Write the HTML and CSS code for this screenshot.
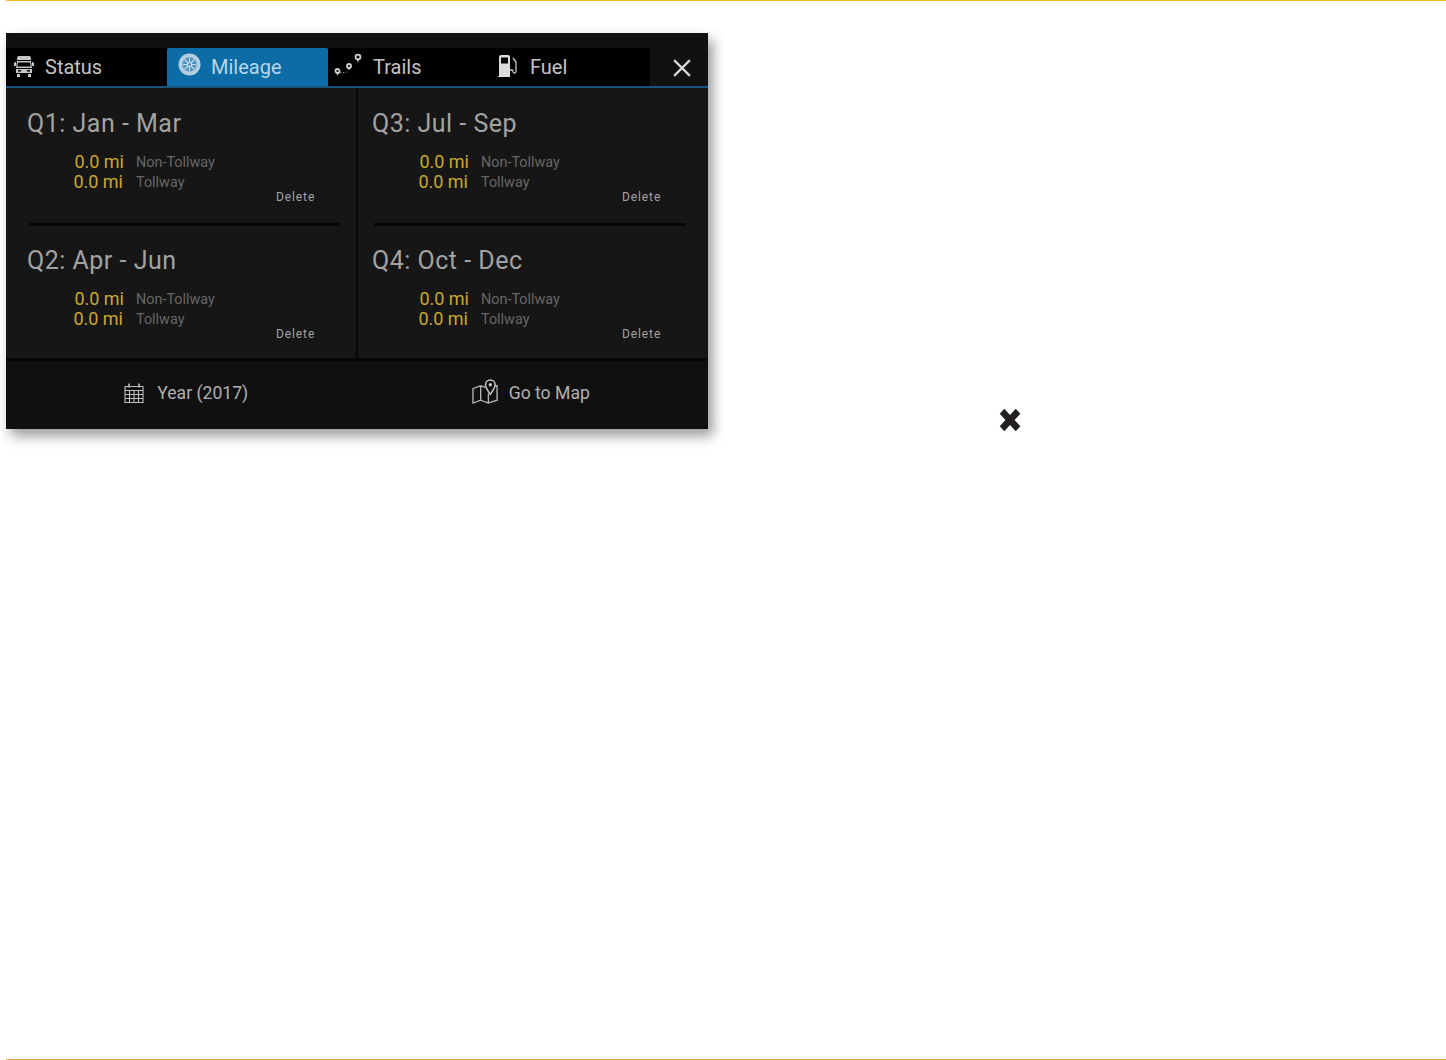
FILE: index.html
```html
<!DOCTYPE html>
<html lang="en">
<head>
<meta charset="utf-8">
<title>Mileage</title>
<link rel="stylesheet" href="styles.css">
</head>
<body>
<div class="page">
  <div class="rule-top"></div>
  <section class="panel">
    <nav class="tabs">
      <div class="tab tab-status">
        <svg class="ic ic-truck" viewBox="0 0 20 24"><path fill="#c4c4c4" d="M4 1h12l1 2v2H3V3zM3 6h14l1 7H2zM1 7h1v4H0V8zM18 7h1l1 1v3h-2zM2 14h16v4H2zM3 19h3v3H3zM14 19h3v3h-3z"/><path fill="#000" d="M4 7.500h12l.6 4H3.400zM4 15h3v1.500H4zM13 15h3v1.500h-3z"/></svg>
        <span>Status</span>
      </div>
      <div class="tab tab-mileage">
        <svg class="ic ic-wheel" viewBox="0 0 24 24"><circle cx="12" cy="12" r="11.500" fill="#b4cfdf"/><circle cx="12" cy="12" r="7.500" fill="#4f94bf"/><g stroke="#c4dcea" stroke-width="1.300"><path d="M12 5v14M5 12h14M7 7l10 10M17 7 7 17"/></g><circle cx="12" cy="12" r="2" fill="#4f94bf" stroke="#d4e5f0"/></svg>
        <span>Mileage</span>
      </div>
      <div class="tab tab-trails">
        <svg class="ic ic-trails" viewBox="0 0 28 26"><g fill="none" stroke="#d0d0d0" stroke-width="1.800"><circle cx="3.500" cy="19" r="2"/><circle cx="15" cy="14" r="2"/><circle cx="24" cy="5" r="2.400"/></g><path fill="#d0d0d0" d="M2.500 21h2l-1 3zM14 16h2l-1 3zM22.800 7.200h2.400L24 11z"/><path stroke="#8a8a8a" stroke-dasharray="1.500 1.500" d="M6 21l7-1"/></svg>
        <span>Trails</span>
      </div>
      <div class="tab tab-fuel">
        <svg class="ic ic-fuel" viewBox="0 0 20 24"><path fill="#dcdcdc" d="M2 3q0-2 2-2h7q2 0 2 2v20H1v-1h1z"/><path fill="#000" d="M4 3.500h7v6H4z"/><path fill="none" stroke="#c8c8c8" stroke-width="1.300" d="M13 16h2q1 0 1 1.500t1.500 1.500 1.500-1.500V8l-3-4"/></svg>
        <span>Fuel</span>
      </div>
      <button class="close" aria-label="Close">
        <svg viewBox="0 0 16 16"><path d="M1 1l14 14M15 1 1 15" stroke="#d6d6d6" stroke-width="2" fill="none"/></svg>
      </button>
    </nav>
    <div class="grid">
      <div class="col col-left">
        <article class="quarter">
          <h2>Q1: Jan - Mar</h2>
          <div class="row"><b>0.0 mi</b><i>Non-Tollway</i></div>
          <div class="row"><b>0.0 mi</b><i>Tollway</i></div>
          <a class="delete">Delete</a>
        </article>
        <hr class="sep">
        <article class="quarter">
          <h2>Q2: Apr - Jun</h2>
          <div class="row"><b>0.0 mi</b><i>Non-Tollway</i></div>
          <div class="row"><b>0.0 mi</b><i>Tollway</i></div>
          <a class="delete">Delete</a>
        </article>
      </div>
      <div class="col col-right">
        <article class="quarter">
          <h2>Q3: Jul - Sep</h2>
          <div class="row"><b>0.0 mi</b><i>Non-Tollway</i></div>
          <div class="row"><b>0.0 mi</b><i>Tollway</i></div>
          <a class="delete">Delete</a>
        </article>
        <hr class="sep">
        <article class="quarter">
          <h2>Q4: Oct - Dec</h2>
          <div class="row"><b>0.0 mi</b><i>Non-Tollway</i></div>
          <div class="row"><b>0.0 mi</b><i>Tollway</i></div>
          <a class="delete">Delete</a>
        </article>
      </div>
    </div>
    <footer class="foot">
      <div class="action action-year">
        <svg class="ic-cal" viewBox="0 0 20 20"><path fill="none" stroke="#bdbdbd" stroke-width="1.100" d="M1 3.500h18v16H1zM1 7.500h18M1 11.500h18M1 15.500h18M5.500 7.500v12M10 7.500v12M14.500 7.500v12"/><path stroke="#bdbdbd" stroke-width="1.600" d="M5 .5v4M15 .5v4"/></svg>
        <span>Year (2017)</span>
      </div>
      <div class="action action-map">
        <svg class="ic-map" viewBox="0 0 28 26"><path fill="none" stroke="#b4b4b4" stroke-width="1.400" d="M9 7 1 10v15l8-3 8 3 9-3V7h-3M9 7v15M17 15v10M9 7l5 2"/><path fill="#101010" stroke="#c8c8c8" stroke-width="1.500" d="M19 1a5 5 0 0 1 5 5q0 3-5 10-5-7-5-10a5 5 0 0 1 5-5z"/><circle cx="19" cy="6" r="1.700" fill="#c8c8c8"/></svg>
        <span>Go to Map</span>
      </div>
    </footer>
  </section>
  <svg class="mark" viewBox="0 0 22 22" preserveAspectRatio="none"><path d="M3 3l16 16M19 3 3 19" stroke="#231f20" stroke-width="6.500" fill="none"/></svg>
  <div class="rule-bottom"></div>
</div>
</body>
</html>
```

FILE: styles.css
```css
* { box-sizing: border-box; }
html, body { margin: 0; padding: 0; background: #fff; }
body { font-family: Roboto, "Liberation Sans", sans-serif; }
.page { position: relative; width: 1446px; height: 1060px; overflow: hidden; }
.rule-top { height: 1px; margin-left: 6px; background: #fdb913; }
.rule-bottom { position: absolute; left: 6px; right: 0; bottom: 0; height: 1px; background: #f0b32d; }
.panel {
  width: 702px; height: 396px; margin: 32px 0 0 6px;
  background: #161616; display: flex; flex-direction: column;
  box-shadow: 5px 7px 12px rgba(0,0,0,.4);
}
.tabs { height: 55px; padding-top: 15px; display: flex; align-items: stretch; border-bottom: 2px solid #17557f; background: #111; position: relative; }
.tab { display: flex; align-items: center; background: #000; color: #c4c4c4; font-size: 20px; }
.tab span { display: block; }
.tab-status { width: 161px; padding-left: 8px; gap: 11px; }
.tab-mileage { width: 161px; padding-left: 11px; gap: 10px; background: #0b6ca6; color: #b9d5e6; border-radius: 2px 2px 0 0; }
.tab-trails { width: 153px; padding-left: 6px; gap: 11px; }
.tab-fuel { width: 169px; padding-left: 16px; gap: 13px; justify-content: flex-start; }
.ic-truck { width: 20px; height: 24px; }
.ic-wheel { width: 23px; height: 23px; margin-top: -6px; }
.ic-trails { width: 28px; height: 26px; margin-top: -4px; }
.ic-fuel { width: 20px; height: 24px; margin-top: -2px; }
.close { width: 58px; border: 0; background: transparent; padding: 1px 0 0 5px; display: flex; align-items: center; justify-content: center; }
.close svg { width: 18px; height: 18px; }
.grid { height: 270px; display: flex; }
.col { flex: 1; display: flex; flex-direction: column; padding-top: 19px; }
.col-left { flex: 0 0 352px; border-right: 2px solid #070707; }
.quarter { flex: none; height: 113px; padding-left: 21px; position: relative; }
.col-right .quarter { padding-left: 14px; }
.quarter h2 { margin: 1px 0 12px; font-size: 25px; line-height: 32px; font-weight: 400; letter-spacing: .5px; color: #a2a2a2; }
.row { height: 20px; display: flex; align-items: center; font-size: 18px; }
.row b { flex: 0 0 97px; margin-top: -1px; text-align: right; font-weight: 400; color: #c9a82c; }
.row + .row b { padding-right: 1px; }
.row i { margin-left: 12px; font-style: normal; font-size: 14.400px; color: #666; }
.delete { position: absolute; top: 83px; left: 270px; font-size: 12px; color: #a3a3a3; letter-spacing: .9px; }
.col-right .delete { left: 264px; }
.sep { flex: none; width: 311px; height: 3px; margin: 3px 0 18px 23px; border: 0; background: #060606; }
.col-right .sep { margin-left: 16px; width: 312px; }
.foot { flex: 1; display: flex; background: #101010; border-top: 3px solid #060606; padding-bottom: 4px; }
.action { flex: 1; display: flex; align-items: center; justify-content: center; gap: 13px; color: #b0b0b0; font-size: 17.600px; }
.action-year { padding-left: 8px; }
.action-map { padding-right: 5px; gap: 10px; }
.ic-cal { width: 20px; height: 20px; }
.ic-map { width: 27px; height: 27px; margin-top: -3px; }
.mark { position: absolute; left: 999px; top: 408px; width: 22px; height: 24px; }
```
